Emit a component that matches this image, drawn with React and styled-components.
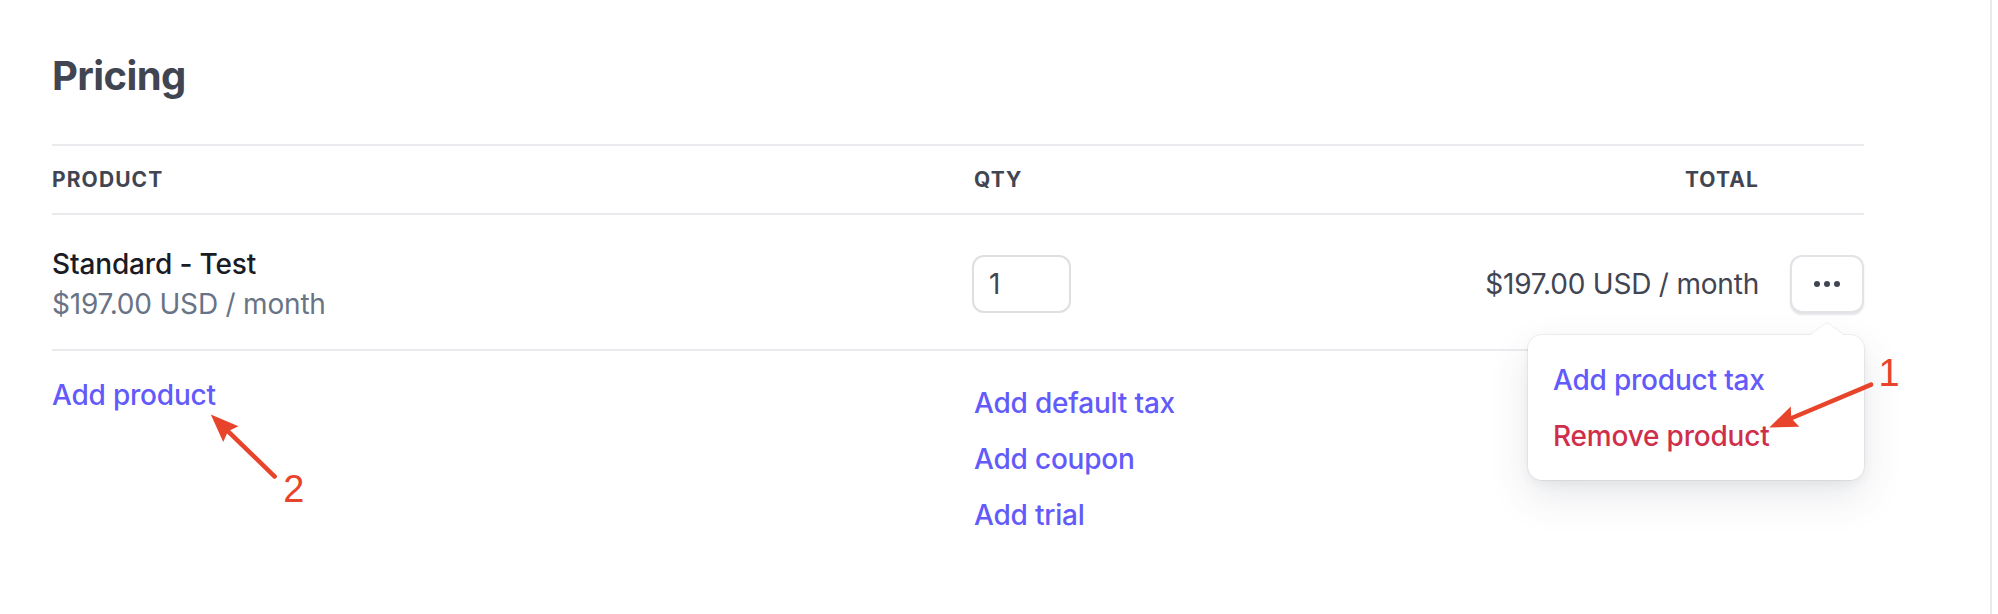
import React from 'react';
import styled, { createGlobalStyle } from 'styled-components';

const GlobalStyle = createGlobalStyle`
    html, body {
        margin: 0;
        padding: 0;
        background: #ffffff;
    }
    body {
        font-family: Inter, "Noto Sans", "Liberation Sans", sans-serif;
        -webkit-font-smoothing: antialiased;
    }
`;

const Page = styled.div`
    position: relative;
    box-sizing: border-box;
    width: 1992px;
    min-height: 614px;
    padding: 52px 0 0 52px;
    border-right: 2px solid #e8e8ee;
    overflow: hidden;
`;

const Content = styled.div`
    width: 1812px;
`;

const Title = styled.h2`
    margin: 0 0 44px;
    font-size: 40px;
    line-height: 48px;
    font-weight: 700;
    letter-spacing: -0.6px;
    color: #414552;
`;

const Row = styled.div`
    display: grid;
    grid-template-columns: 920px 1fr 1fr 105px;
    align-items: ${(p) => p.$align || 'start'};
    padding: ${(p) => p.$padding};
    border-bottom: ${(p) => (p.$divider ? '2px solid #ebebef' : 'none')};
    border-top: ${(p) => (p.$top ? '2px solid #ebebef' : 'none')};
`;

const HeadCell = styled.div`
    font-size: 21px;
    line-height: 28px;
    font-weight: 700;
    letter-spacing: 1.1px;
    text-transform: uppercase;
    color: #414552;
    text-align: ${(p) => (p.$right ? 'right' : 'left')};
    padding-left: ${(p) => p.$indent || 0};
`;

const Cell = styled.div`
    display: flex;
    flex-direction: column;
    align-items: ${(p) => (p.$right ? 'flex-end' : 'flex-start')};
    gap: 16px;
    padding-top: ${(p) => p.$top || 0};
    padding-left: ${(p) => p.$indent || 0};
`;

const ProductName = styled.div`
    font-size: 28px;
    line-height: 40px;
    font-weight: 500;
    letter-spacing: -0.15px;
    color: #1a1b25;
`;

const Price = styled.div`
    font-size: 28px;
    line-height: 40px;
    letter-spacing: -0.2px;
    color: ${(p) => (p.$muted ? '#687385' : '#414552')};
`;

const QtyInput = styled.div`
    box-sizing: border-box;
    display: flex;
    align-items: center;
    width: 99px;
    height: 58px;
    padding: 0 15px;
    border: 2px solid #dfdfe3;
    border-radius: 12px;
    font-size: 28px;
    line-height: 40px;
    color: #414552;
`;

const ActionCell = styled.div`
    position: relative;
    justify-self: end;
`;

const MoreButton = styled.button`
    box-sizing: border-box;
    display: flex;
    align-items: center;
    justify-content: center;
    gap: 4px;
    width: 74px;
    height: 58px;
    padding: 0;
    background: #ffffff;
    border: 2px solid #e2e2e7;
    border-radius: 12px;
    box-shadow: 0 2px 2px rgba(40, 44, 60, 0.12);
    cursor: pointer;
`;

const Dot = styled.span`
    width: 6px;
    height: 6px;
    border-radius: 50%;
    background: #414552;
`;

const Popover = styled.div`
    position: absolute;
    top: calc(100% + 22px);
    right: 0;
    z-index: 2;
    box-sizing: border-box;
    width: 336px;
    padding: 25px 25px 24px;
    display: flex;
    flex-direction: column;
    gap: 16px;
    background: #ffffff;
    border-radius: 14px;
    box-shadow: 0 0 0 1px rgba(60, 66, 87, 0.07), 0 16px 40px rgba(60, 66, 87, 0.12),
        0 4px 12px rgba(0, 0, 0, 0.05);

    &::before {
        content: '';
        position: absolute;
        top: -12.5px;
        right: 37px;
        width: 25px;
        height: 25px;
        background: #ffffff;
        border-radius: 3px;
        box-shadow: -1px -1px 0 rgba(60, 66, 87, 0.08);
        transform: translateX(50%) scaleY(0.72) rotate(45deg);
    }
`;

const Link = styled.a`
    font-size: 28px;
    line-height: 40px;
    font-weight: 500;
    letter-spacing: -0.2px;
    color: ${(p) => (p.$danger ? '#cf2f4b' : '#625afa')};
    text-decoration: none;
    cursor: pointer;
    white-space: nowrap;
    position: relative;
`;

const Annotations = styled.svg`
    position: absolute;
    inset: 0;
    width: 100%;
    height: 100%;
    pointer-events: none;
    z-index: 5;
`;

const Arrow = ({ from, to }) => {
    const [x1, y1] = from;
    const [x2, y2] = to;
    const len = Math.hypot(x2 - x1, y2 - y1);
    const ux = (x2 - x1) / len;
    const uy = (y2 - y1) / len;
    const head = 28;
    const half = 11;
    const bx = x2 - ux * head;
    const by = y2 - uy * head;
    const points = [
        [x2, y2],
        [bx - uy * half, by + ux * half],
        [bx + ux * 4, by + uy * 4],
        [bx + uy * half, by - ux * half],
    ]
        .map((p) => p.join(','))
        .join(' ');
    return (
        <g>
            <line
                x1={x1}
                y1={y1}
                x2={bx + ux * 6}
                y2={by + uy * 6}
                stroke="#e8442b"
                strokeWidth="4.5"
                strokeLinecap="round"
            />
            <polygon points={points} fill="#e8442b" />
        </g>
    );
};

const Number = styled.text`
    font-family: "Liberation Sans", Arial, sans-serif;
    font-size: 38px;
    fill: #e8442b;
`;

export default function App() {
    return (
        <>
            <GlobalStyle />
            <Page>
                <Content>
                    <Title>Pricing</Title>
                    <Row $top $divider $padding="20px 0 19px">
                        <HeadCell>Product</HeadCell>
                        <HeadCell $indent="2px">Qty</HeadCell>
                        <HeadCell $right>Total</HeadCell>
                        <div />
                    </Row>
                    <Row $divider $align="center" $padding="29px 0 25px">
                        <Cell $top="0">
                            <div>
                                <ProductName>Standard - Test</ProductName>
                                <Price $muted>$197.00 USD / month</Price>
                            </div>
                        </Cell>
                        <Cell>
                            <QtyInput>1</QtyInput>
                        </Cell>
                        <Cell $right>
                            <Price>$197.00 USD / month</Price>
                        </Cell>
                        <ActionCell>
                            <MoreButton aria-label="More actions">
                                <Dot />
                                <Dot />
                                <Dot />
                            </MoreButton>
                            <Popover>
                                <Link>Add product tax</Link>
                                <Link $danger>Remove product</Link>
                            </Popover>
                        </ActionCell>
                    </Row>
                    <Row $padding="0">
                        <Cell $top="24px">
                            <Link>Add product</Link>
                        </Cell>
                        <Cell $top="32px" $indent="2px">
                            <Link>Add default tax</Link>
                            <Link>Add coupon</Link>
                            <Link>Add trial</Link>
                        </Cell>
                        <div />
                        <div />
                    </Row>
                </Content>
                <Annotations viewBox="0 0 1992 614" preserveAspectRatio="xMinYMin">
                    <Arrow from={[1873, 385]} to={[1771, 428]} />
                    <Number x="1891" y="386" textAnchor="middle">1</Number>
                    <Arrow from={[275, 477]} to={[211, 415]} />
                    <Number x="294" y="503" textAnchor="middle">2</Number>
                </Annotations>
            </Page>
        </>
    );
}
